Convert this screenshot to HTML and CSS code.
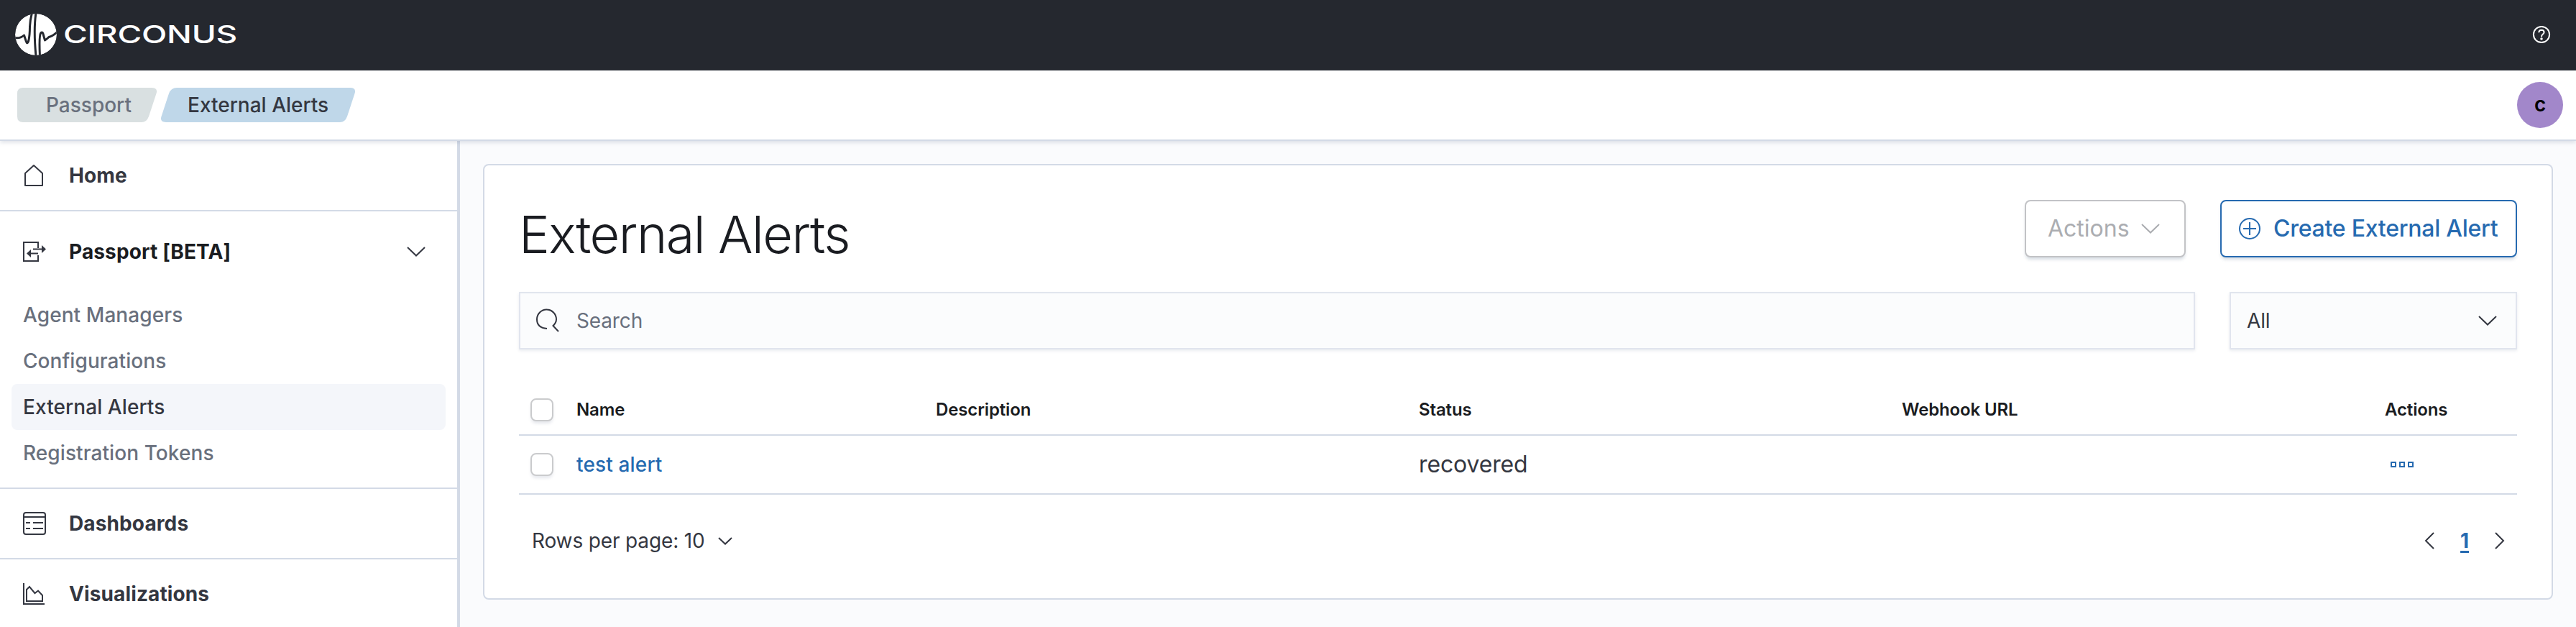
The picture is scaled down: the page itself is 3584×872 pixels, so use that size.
FILE: index.html
```html
<!DOCTYPE html>
<html lang="en">
<head>
<meta charset="utf-8">
<title>External Alerts</title>
<link rel="stylesheet" href="styles.css">
</head>
<body>
<header class="topbar">
  <div class="brand">
    <svg class="brand-mark" viewBox="0 0 58 58">
      <defs><clipPath id="disc"><circle cx="29" cy="29" r="29"/></clipPath></defs>
      <g clip-path="url(#disc)">
        <circle cx="29" cy="29" r="29" fill="#fff"/>
        <g fill="none" stroke="#25282f" stroke-width="3" stroke-linejoin="round">
          <path d="M-1 33.500Q7 35 12.500 30L15.500 39Q17 43 18.700 38Q20.500 30 20.500 18Q21 8 23.500 -1"/>
          <path d="M29 -1Q25.500 22 29 59"/>
          <path d="M34.500 59Q33 30 36 26.500Q38.500 24.500 39.500 30L41.500 37Q44 35.500 47 32.500Q52 31.500 59 25"/>
        </g>
      </g>
    </svg>
    <svg class="brand-name" viewBox="0 0 240 30"><text x="-1" y="27" textLength="242" lengthAdjust="spacingAndGlyphs">CIRCONUS</text></svg>
  </div>
  <svg class="help" viewBox="0 0 24 24" fill="none" stroke="#fff" stroke-width="1.700"><circle cx="12" cy="12" r="11.100"/><path d="M8.300 9.300Q8.500 5.800 12 5.800Q15.600 5.900 15.600 9Q15.500 10.600 13.400 12Q12 13 12 15.300"/><circle cx="12" cy="18" r=".8" fill="#fff"/></svg>
</header>
<div class="subbar">
  <nav class="crumbs">
    <a class="crumb crumb-first"><svg viewBox="0 0 194 48"><path d="M8 0H187Q196 0 193.500 8L183 40Q180 48 173 48H8Q0 48 0 40V8Q0 0 8 0Z" fill="#d9e0e1"/></svg><span>Passport</span></a>
    <a class="crumb crumb-last"><svg viewBox="0 0 270 48"><path d="M22 0H263Q272 0 269.500 8L259 40Q256 48 249 48H7Q-2 48 .5 40L11 8Q14 0 22 0Z" fill="#bfd7e9"/></svg><span>External Alerts</span></a>
  </nav>
  <div class="avatar">c</div>
</div>
<div class="layout">
  <aside class="sidebar">
    <a class="nav-head"><svg viewBox="0 0 32 32"><path d="M3 30V13L15 2L27 13V30Z" stroke-linejoin="round"/></svg><span>Home</span></a>
    <section class="nav-section">
      <a class="nav-head nav-open"><svg viewBox="0 0 32 32"><path d="M21 11V3H1V29H21V21M14 12.500H28M21 18.500H8"/><path d="M26 7L32 12.500L26 18ZM11 13L5 18.500L11 24Z" fill="#343741" stroke="none"/></svg><span>Passport [BETA]</span><svg class="nav-chevron" viewBox="0 0 26 14"><path d="M1 1L13 12.500L25 1"/></svg></a>
      <a class="nav-item">Agent Managers</a>
      <a class="nav-item">Configurations</a>
      <a class="nav-item selected">External Alerts</a>
      <a class="nav-item">Registration Tokens</a>
    </section>
    <a class="nav-head"><svg viewBox="0 0 32 32"><rect x="1" y="1" width="30" height="30" rx="3"/><path d="M1 7H31M4 15H10M14 15H28M4 23H10M14 23H28"/></svg><span>Dashboards</span></a>
    <a class="nav-head"><svg viewBox="0 0 32 32"><path d="M1 1V30H30M5 26V10L9 6L16.500 15L21 11.500L27 18V26Z"/></svg><span>Visualizations</span></a>
  </aside>
  <main class="main">
    <div class="panel">
      <div class="title-row">
        <h1>External Alerts</h1>
        <button class="btn btn-disabled"><span>Actions</span><svg width="26" height="14" viewBox="0 0 26 14"><path d="M1 1L13 12.500L25 1"/></svg></button>
        <button class="btn btn-primary"><svg width="30" height="30" viewBox="0 0 30 30"><circle cx="15" cy="15" r="14"/><path d="M15 6V24M6 15H24"/></svg><span>Create External Alert</span></button>
      </div>
      <div class="filters">
        <div class="field search"><svg width="32" height="32" viewBox="0 0 32 32"><path d="M15 27Q1 26 1 14A13.500 13.500 0 0 1 28 14Q28 19 23.500 23L31 31"/></svg><span>Search</span></div>
        <div class="field select"><span>All</span><svg width="26" height="14" viewBox="0 0 26 14"><path d="M1 1L13 12.500L25 1"/></svg></div>
      </div>
      <div class="table">
        <div class="row head"><i class="check"></i><span>Name</span><span>Description</span><span>Status</span><span>Webhook URL</span><span>Actions</span></div>
        <div class="row"><i class="check"></i><a class="link">test alert</a><span></span><span class="status">recovered</span><span></span><svg class="more" width="32" height="8" viewBox="0 0 32 8"><path d="M1 1H7V7H1ZM13 1H19V7H13ZM25 1H31V7H25Z"/></svg></div>
      </div>
      <div class="footer">
        <div class="per-page"><span>Rows per page: 10</span><svg width="20" height="11" viewBox="0 0 20 11"><path d="M1 1L10 9.500L19 1"/></svg></div>
        <div class="pager"><svg width="13" height="24" viewBox="0 0 13 24"><path d="M12 1L1 12L12 23"/></svg><b>1</b><svg width="13" height="24" viewBox="0 0 13 24"><path d="M1 1L12 12L1 23"/></svg></div>
      </div>
    </div>
  </main>
</div>
</body>
</html>
```

FILE: styles.css
```css
* { box-sizing: border-box; }
body { margin: 0; height: 872px; overflow: hidden; display: flex; flex-direction: column; background: #fafbfd; color: #343741; font: 400 28px/40px Inter, sans-serif; letter-spacing: -.14px; }
svg { display: block; flex: none; fill: none; stroke: #343741; stroke-width: 2; overflow: visible; }
.topbar { height: 98px; flex: none; background: #25282f; display: flex; align-items: center; justify-content: space-between; padding: 0 36px 2px 21px; }
.brand { display: flex; align-items: center; gap: 10px; }
.brand-mark { width: 58px; height: 58px; stroke: none; }
.brand-name { width: 240px; height: 30px; }
.brand-name text { font: 500 34px Inter, sans-serif; fill: #fff; stroke: none; }
.help { width: 24px; height: 24px; stroke: #fff; }
.subbar { position: relative; height: 98px; flex: none; background: #fff; border-bottom: 2px solid #d3dae6; box-shadow: 0 2px 6px rgba(80, 95, 130, .2); display: flex; align-items: center; justify-content: space-between; padding: 0 18px 0 24px; }
.crumbs { display: flex; gap: 6px; font-weight: 500; letter-spacing: 0; }
.crumb { display: grid; height: 48px; align-items: center; }
.crumb svg { grid-area: 1 / 1; height: 48px; stroke: none; }
.crumb span { grid-area: 1 / 1; z-index: 1; }
.crumb-first { width: 194px; color: #69707d; }
.crumb-first span { padding-left: 40px; }
.crumb-last { width: 270px; }
.crumb-last span { padding-left: 37px; }
.avatar { width: 64px; height: 64px; border-radius: 50%; background: #a287ca; color: #000; font-weight: 600; text-align: center; line-height: 62px; }
.layout { flex: 1; min-height: 0; display: flex; }
.sidebar { width: 640px; flex: none; background: #fff; border-right: 4px solid #d3dae6; }
.nav-head { height: 98px; display: flex; align-items: center; gap: 32px; padding: 0 44px 0 32px; border-bottom: 2px solid #d3dae6; font-weight: 700; letter-spacing: .12px; }
.nav-head > svg:first-child { width: 32px; height: 32px; }
.nav-section { border-bottom: 2px solid #d3dae6; padding: 8px 16px 16px; height: 386px; }
.nav-open { border: 0; padding: 0 28px 0 16px; height: 96px; margin-bottom: 8px; color: #1a1c21; }
.nav-chevron { width: 26px; height: 14px; margin-left: auto; }
.nav-item { display: block; height: 64px; line-height: 64px; padding-left: 16px; border-radius: 8px; font-weight: 500; letter-spacing: .08px; color: #69707d; }
.selected { background: #f4f6fa; color: #343741; }
.main { flex: 1; padding: 32px; }
.panel { height: 606px; background: #fff; border: 2px solid #d3dae6; border-radius: 8px; padding: 48px; }
.title-row { display: flex; height: 80px; }
h1 { margin: 0 auto 0 0; font-size: 72px; font-weight: 300; letter-spacing: -1.5px; line-height: 96px; color: #1a1c21; }
.btn { height: 80px; background: #fff; border-radius: 8px; display: flex; align-items: center; font: 500 32px/40px Inter, sans-serif; letter-spacing: -.25px; box-shadow: 0 4px 4px -1px rgba(60, 90, 120, .2); padding: 0; white-space: nowrap; }
.btn-disabled { width: 224px; margin-right: 48px; border: 2px solid #c2c3c6; color: #abadb1; font-weight: 400; letter-spacing: 0; padding: 0 34px 0 30px; justify-content: space-between; }
.btn-disabled svg { stroke: #abadb1; }
.btn-primary { width: 413px; border: 2px solid #266ab0; color: #266ab0; padding-left: 24px; gap: 18px; }
.btn-primary svg { stroke: #266ab0; }
.filters { display: flex; gap: 48px; margin-top: 48px; }
.field { height: 80px; border: 2px solid #e1e5ee; background: #fbfcfd; box-shadow: 0 2px 4px rgba(80, 95, 130, .12); display: flex; align-items: center; }
.search { flex: 1; color: #69707d; padding-left: 22px; gap: 24px; }
.select { width: 400px; padding: 0 26px 0 22px; justify-content: space-between; }
.table { margin-top: 48px; }
.row { display: grid; grid-template-columns: 64px 500px 672px 672px 672px 184px; align-items: center; height: 82px; padding: 0 0 0 16px; border-bottom: 2px solid #d3dae6; }
.head { height: 72px; padding-top: 2px; font-size: 24px; font-weight: 600; color: #1a1c21; }
.check { width: 32px; height: 32px; border: 2px solid #cacbcd; border-radius: 8px; background: #fff; box-shadow: 0 4px 4px -1px rgba(80, 95, 130, .14); }
.link { color: #266ab0; font-weight: 500; letter-spacing: .15px; }
.status { font-size: 32px; }
.more { stroke: #266ab0; margin-left: 8px; }
.footer { display: flex; justify-content: space-between; align-items: center; height: 128px; padding: 0 18px; }
.per-page, .pager { display: flex; align-items: center; gap: 18px; }
.pager { gap: 36px; }
.pager b { color: #266ab0; text-decoration: underline; text-decoration-thickness: 3px; text-underline-offset: 4px; }
```
